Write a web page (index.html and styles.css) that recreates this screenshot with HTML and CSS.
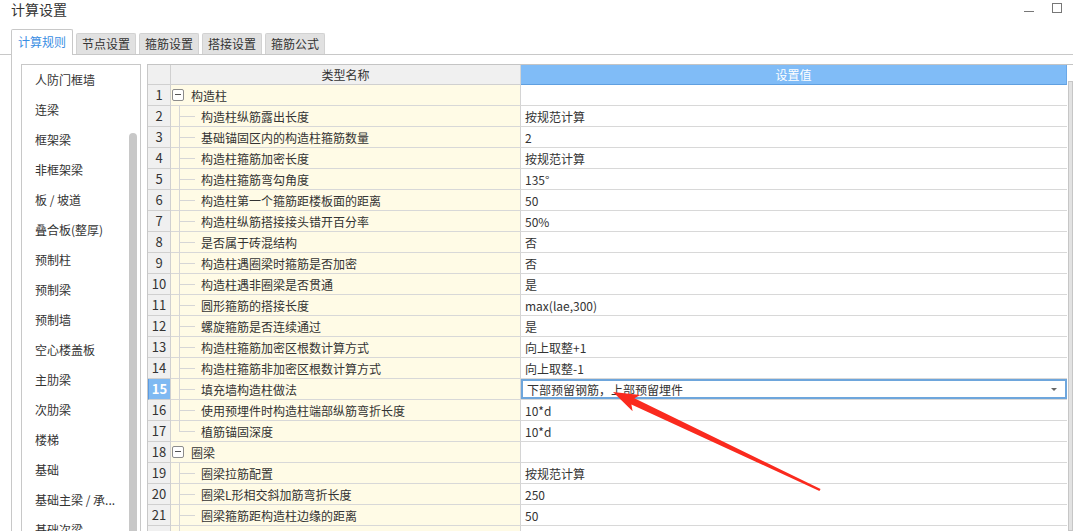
FILE: index.html
```html
<!DOCTYPE html>
<html lang="zh-CN">
<head>
<meta charset="utf-8">
<title>计算设置</title>
<link rel="stylesheet" href="styles.css">
</head>
<body>
<div class="window">
  <div class="titlebar">
    <div class="title">计算设置</div>
    <div class="controls">
      <span class="ctl-min"></span>
      <span class="ctl-max"></span>
    </div>
  </div>
  <div class="tabs">
    <div class="tab active">计算规则</div>
    <div class="tab">节点设置</div>
    <div class="tab">箍筋设置</div>
    <div class="tab">搭接设置</div>
    <div class="tab">箍筋公式</div>
  </div>
  <div class="content">
    <div class="side">
      <ul class="side-list">
        <li>人防门框墙</li>
        <li>连梁</li>
        <li>框架梁</li>
        <li>非框架梁</li>
        <li>板 / 坡道</li>
        <li>叠合板(整厚)</li>
        <li>预制柱</li>
        <li>预制梁</li>
        <li>预制墙</li>
        <li>空心楼盖板</li>
        <li>主肋梁</li>
        <li>次肋梁</li>
        <li>楼梯</li>
        <li>基础</li>
        <li>基础主梁 / 承...</li>
        <li>基础次梁</li>
      </ul>
      <div class="side-scroll"></div>
    </div>
    <div class="grid-wrap">
      <div class="grid">
        <div class="row head">
          <div class="num"></div>
          <div class="name">类型名称</div>
          <div class="val">设置值</div>
        </div>
        <div class="row"><div class="num">1</div><div class="name"><span class="toggle"></span><span class="group-text">构造柱</span></div><div class="val"></div></div>
        <div class="row"><div class="num">2</div><div class="name"><span class="branch"></span>构造柱纵筋露出长度</div><div class="val">按规范计算</div></div>
        <div class="row"><div class="num">3</div><div class="name"><span class="branch"></span>基础锚固区内的构造柱箍筋数量</div><div class="val">2</div></div>
        <div class="row"><div class="num">4</div><div class="name"><span class="branch"></span>构造柱箍筋加密长度</div><div class="val">按规范计算</div></div>
        <div class="row"><div class="num">5</div><div class="name"><span class="branch"></span>构造柱箍筋弯勾角度</div><div class="val">135°</div></div>
        <div class="row"><div class="num">6</div><div class="name"><span class="branch"></span>构造柱第一个箍筋距楼板面的距离</div><div class="val">50</div></div>
        <div class="row"><div class="num">7</div><div class="name"><span class="branch"></span>构造柱纵筋搭接接头错开百分率</div><div class="val">50%</div></div>
        <div class="row"><div class="num">8</div><div class="name"><span class="branch"></span>是否属于砖混结构</div><div class="val">否</div></div>
        <div class="row"><div class="num">9</div><div class="name"><span class="branch"></span>构造柱遇圈梁时箍筋是否加密</div><div class="val">否</div></div>
        <div class="row"><div class="num">10</div><div class="name"><span class="branch"></span>构造柱遇非圈梁是否贯通</div><div class="val">是</div></div>
        <div class="row"><div class="num">11</div><div class="name"><span class="branch"></span>圆形箍筋的搭接长度</div><div class="val">max(lae,300)</div></div>
        <div class="row"><div class="num">12</div><div class="name"><span class="branch"></span>螺旋箍筋是否连续通过</div><div class="val">是</div></div>
        <div class="row"><div class="num">13</div><div class="name"><span class="branch"></span>构造柱箍筋加密区根数计算方式</div><div class="val">向上取整+1</div></div>
        <div class="row"><div class="num">14</div><div class="name"><span class="branch"></span>构造柱箍筋非加密区根数计算方式</div><div class="val">向上取整-1</div></div>
        <div class="row selected"><div class="num">15</div><div class="name"><span class="branch"></span>填充墙构造柱做法</div><div class="val"><span class="val-text">下部预留钢筋，上部预留埋件</span><span class="caret"></span></div></div>
        <div class="row"><div class="num">16</div><div class="name"><span class="branch"></span>使用预埋件时构造柱端部纵筋弯折长度</div><div class="val">10*d</div></div>
        <div class="row"><div class="num">17</div><div class="name"><span class="branch last"></span>植筋锚固深度</div><div class="val">10*d</div></div>
        <div class="row"><div class="num">18</div><div class="name"><span class="toggle"></span><span class="group-text">圈梁</span></div><div class="val"></div></div>
        <div class="row"><div class="num">19</div><div class="name"><span class="branch"></span>圈梁拉筋配置</div><div class="val">按规范计算</div></div>
        <div class="row"><div class="num">20</div><div class="name"><span class="branch"></span>圈梁L形相交斜加筋弯折长度</div><div class="val">250</div></div>
        <div class="row"><div class="num">21</div><div class="name"><span class="branch"></span>圈梁箍筋距构造柱边缘的距离</div><div class="val">50</div></div>
        <div class="row"><div class="num">22</div><div class="name"><span class="branch"></span></div><div class="val"></div></div>
      </div>
      <div class="grid-scroll"></div>
    </div>
  </div>
  <svg class="annot" width="1073" height="531" viewBox="0 0 1073 531">
    <polygon points="613,392 640.4,395 634.4,398.2 820.6,489 819.4,491 631.4,404.6 632.6,411.2" fill="#fa2a1e"/>
  </svg>
</div>
</body>
</html>
```

FILE: styles.css
```css
* { box-sizing: border-box; }

body {
  margin: 0;
  background: #fff;
  color: #333;
  font-family: "Noto Sans CJK SC", "Noto Sans", sans-serif;
}

.window {
  position: relative;
  width: 1073px;
  height: 531px;
  overflow: hidden;
  display: flex;
  flex-direction: column;
}

/* title bar */
.titlebar {
  height: 29px;
  flex-shrink: 0;
  display: flex;
  justify-content: space-between;
  padding: 0 11px;
}
.title {
  font-size: 14px;
  line-height: 19px;
  color: #333;
}
.controls {
  display: flex;
  gap: 18px;
  align-items: flex-start;
}
.ctl-min {
  width: 10px;
  height: 1px;
  margin-top: 11px;
  background: #777;
  border-top: 1px solid #777;
}
.ctl-max {
  width: 10px;
  height: 10px;
  margin-top: 3px;
  border: 1px solid #777;
}

/* tabs */
.tabs {
  height: 26px;
  flex-shrink: 0;
  display: flex;
  align-items: flex-end;
  gap: 3px;
  padding-left: 11px;
  border-bottom: 1px solid #c8c8c8;
}
.tab {
  width: 60px;
  height: 21px;
  background: #e1e1e1;
  border: 1px solid #d2d2d2;
  border-bottom: none;
  border-radius: 2px 2px 0 0;
  font-size: 12px;
  line-height: 20px;
  text-align: center;
  color: #333;
}
.tab.active {
  width: 62px;
  height: 26px;
  margin-bottom: -1px;
  background: #fff;
  border-color: #c8c8c8;
  color: #3a8ee3;
  line-height: 24px;
}

/* content */
.content {
  flex: 1;
  min-height: 0;
  display: flex;
  gap: 6px;
  margin-left: 11px;
  padding: 9px 0 0 9px;
  border-left: 1px solid #c8c8c8;
}

.side {
  width: 120px;
  flex-shrink: 0;
  display: flex;
  border: 1px solid #c8c8c8;
  border-bottom: none;
}
.side-list {
  flex: 1;
  list-style: none;
  margin: 0;
  padding: 0;
}
.side-list li {
  height: 30px;
  line-height: 30px;
  padding-left: 13px;
  font-size: 12px;
  color: #333;
  white-space: nowrap;
}
.side-scroll {
  width: 8px;
  margin: 68px 3px 0 0;
  background: #c8c8c8;
  border-radius: 4px 4px 0 0;
}

/* grid */
.grid-wrap {
  flex: 1;
  display: flex;
  border-top: 1px solid #c4c4c4;
}
.grid {
  width: 920px;
  flex-shrink: 0;
  border-left: 1px solid #c8c8c8;
}
.grid-scroll {
  width: 5px;
  margin: 16px 0 0 1px;
  background: #e2e2e2;
  border: 1px solid #c6c6c6;
}

.row {
  display: flex;
  height: 21px;
  font-size: 12px;
}
.num {
  width: 23px;
  flex-shrink: 0;
  background: #f0f0f0;
  border-right: 1px solid #d0d0d0;
  border-bottom: 1px solid #d0d0d0;
  text-align: center;
  font-size: 13px;
  line-height: 20px;
  color: #333;
}
.name {
  width: 350px;
  flex-shrink: 0;
  display: flex;
  align-items: center;
  background: #fffbe6;
  border-right: 1px solid #d4d4d4;
  border-bottom: 1px solid #d8d8d8;
  white-space: nowrap;
}
.val {
  width: 546px;
  flex-shrink: 0;
  display: flex;
  align-items: center;
  padding-left: 4px;
  background: #fff;
  border-bottom: 1px solid #d8d8d8;
  white-space: nowrap;
}

.row.head {
  height: 20px;
}
.head .num {
  line-height: 19px;
}
.head .name {
  justify-content: center;
  background: #f0f0f0;
  border-bottom: 1px solid #d0d0d0;
}
.head .val {
  justify-content: center;
  padding-left: 0;
  background: #80bcf7;
  color: #fff;
  border-bottom: 1px solid #5f9fe0;
  border-right: 1px solid #6aa8e8;
}

/* tree */
.toggle {
  position: relative;
  width: 12px;
  height: 12px;
  margin-left: 1px;
  border: 1px solid #8c8c8c;
  border-radius: 2px;
  background: #fff;
  flex-shrink: 0;
}
.toggle::after {
  content: "";
  position: absolute;
  left: 2px;
  right: 2px;
  top: 4px;
  height: 1px;
  background: #555;
}
.group-text {
  margin-left: 7px;
}
.branch {
  position: relative;
  width: 30px;
  align-self: stretch;
  flex-shrink: 0;
}
.branch::before {
  content: "";
  position: absolute;
  left: 8px;
  top: 0;
  bottom: -1px;
  width: 1px;
  background: #d6d6d6;
}
.branch.last::before {
  bottom: 50%;
}
.branch::after {
  content: "";
  position: absolute;
  left: 8px;
  top: 50%;
  width: 16px;
  height: 1px;
  background: #d6d6d6;
}

/* selected row */
.selected .num {
  background: #7fb9f2;
  color: #fff;
  font-weight: bold;
  border-left: 1px solid #5d9be0;
}
.selected .val {
  padding-left: 6px;
  padding-right: 10px;
  box-shadow: inset 0 0 0 2px #6ea6dc;
  justify-content: space-between;
}
.caret {
  width: 0;
  height: 0;
  border-left: 3px solid transparent;
  border-right: 3px solid transparent;
  border-top: 3px solid #666;
}

/* annotation overlay */
.annot {
  position: absolute;
  left: 0;
  top: 0;
  pointer-events: none;
}
```
